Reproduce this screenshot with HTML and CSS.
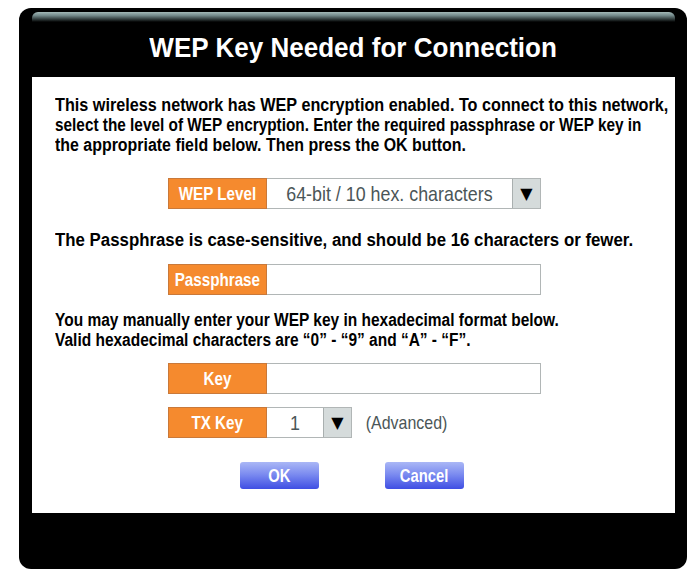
FILE: index.html
```html
<!DOCTYPE html>
<html>
<head>
<meta charset="utf-8">
<title>WEP Key Needed for Connection</title>
<link rel="stylesheet" href="styles.css">
</head>
<body>
<div class="device">
  <div class="topbar"></div>
  <h1 class="title"><span class="cond">WEP Key Needed for Connection</span></h1>
  <div class="panel">
    <p class="copy intro">
      <span class="line l1">This wireless network has WEP encryption enabled. To connect to this network,</span>
      <span class="line l2">select the level of WEP encryption. Enter the required passphrase or WEP key in</span>
      <span class="line l3">the appropriate field below. Then press the OK button.</span>
    </p>

    <div class="row row-level">
      <div class="label"><span class="cond">WEP Level</span></div>
      <div class="field select">
        <span class="value"><span class="cond">64-bit / 10 hex. characters</span></span>
        <span class="arrow">&#9660;</span>
      </div>
    </div>

    <p class="copy case"><span class="line">The Passphrase is case-sensitive, and should be 16 characters or fewer.</span></p>

    <div class="row row-pass">
      <div class="label"><span class="cond">Passphrase</span></div>
      <div class="field"></div>
    </div>

    <p class="copy hex">
      <span class="line">You may manually enter your WEP key in hexadecimal format below.</span>
      <span class="line">Valid hexadecimal characters are “0” - “9” and “A” - “F”.</span>
    </p>

    <div class="row row-key">
      <div class="label"><span class="cond">Key</span></div>
      <div class="field"></div>
    </div>

    <div class="row row-tx">
      <div class="label"><span class="cond">TX Key</span></div>
      <div class="field select small">
        <span class="value"><span class="cond">1</span></span>
        <span class="arrow">&#9660;</span>
      </div>
      <span class="note"><span class="cond">(Advanced)</span></span>
    </div>

    <div class="buttons">
      <button class="btn"><span class="cond">OK</span></button>
      <button class="btn"><span class="cond">Cancel</span></button>
    </div>
  </div>
</div>
</body>
</html>
```

FILE: styles.css
```css
html, body {
  margin: 0;
  padding: 0;
  background: #ffffff;
}

body {
  font-family: "Liberation Sans", Arial, sans-serif;
}

/* narrow the sans face to a condensed look */
.cond {
  display: inline-block;
  white-space: nowrap;
  transform: scaleX(0.86);
}

.device {
  box-sizing: border-box;
  width: 668px;
  height: 561px;
  margin: 8px 0 0 19px;
  padding: 4px 12px 0 13px;
  background: #000000;
  border-radius: 12px;
}

.topbar {
  height: 10px;
  border-radius: 6px 6px 0 0;
  background: linear-gradient(to bottom, #a3b9b7 0%, #73898a 35%, #2c3636 75%, #000000 100%);
}

.title {
  margin: 0;
  height: 55px;
  line-height: 52px;
  text-align: center;
  color: #ffffff;
  font-size: 28px;
  font-weight: bold;
}

.title .cond {
  transform: scaleX(0.93);
}

.panel {
  box-sizing: border-box;
  height: 436px;
  background: #ffffff;
  padding: 18px 0 0 23px;
  display: flex;
  flex-direction: column;
  align-items: flex-start;
  overflow: hidden;
}

.copy {
  align-self: stretch;
  margin: 0;
  color: #000000;
  font-size: 18px;
  font-weight: bold;
  line-height: 20px;
}

.copy .line {
  display: block;
  white-space: nowrap;
  transform-origin: 0 0;
  transform: scaleX(0.87);
}

.intro .l1 { transform: scaleX(0.9); }
.intro .l2 { transform: scaleX(0.853); }
.intro .l3 { transform: scaleX(0.885); }
.case .line { transform: scaleX(0.935); }
.hex .line  { transform: scaleX(0.86); }

.intro { margin-bottom: 23px; }
.case  { margin: 21px 0 14px; }
.hex   { margin: 15px 0 13px; }

.row {
  display: flex;
  align-items: stretch;
  height: 31px;
  margin-left: 113px;
}

.row-key { margin-bottom: 13px; }

.label {
  box-sizing: border-box;
  width: 99px;
  display: flex;
  align-items: center;
  justify-content: center;
  background: #f58a2e;
  border: 1px solid #c9793a;
  color: #ffffff;
  font-size: 19px;
  font-weight: bold;
}

.label .cond {
  transform: scaleX(0.8);
}

.field {
  box-sizing: border-box;
  width: 274px;
  background: #ffffff;
  border: 1px solid #b1b6b6;
  border-left: none;
}

.select {
  display: flex;
  align-items: stretch;
}

.select .value {
  flex: 1;
  display: flex;
  align-items: center;
  justify-content: center;
  color: #4b5658;
  font-size: 21px;
}

.select .value .cond {
  transform: scaleX(0.85);
}

.select .arrow {
  box-sizing: border-box;
  width: 28px;
  display: flex;
  align-items: center;
  justify-content: center;
  background: #d5dbdb;
  border-left: 1px solid #a9afaf;
  color: #000000;
  font-family: "DejaVu Sans", sans-serif;
  font-size: 16px;
}

.select.small {
  width: 85px;
}

.note {
  display: flex;
  align-items: center;
  margin-left: 6px;
  color: #4b5658;
  font-size: 19px;
}

.note .cond {
  transform: scaleX(0.84);
}

.buttons {
  display: flex;
  gap: 66px;
  margin: 24px 0 0 185px;
}

.btn {
  width: 79px;
  height: 27px;
  padding: 0;
  border: none;
  border-radius: 3px;
  background: linear-gradient(to bottom, #aab7f6 0%, #7c8cf0 45%, #3f4ee3 100%);
  color: #ffffff;
  font-family: inherit;
  font-size: 19px;
  font-weight: bold;
}

.btn .cond {
  transform: scaleX(0.78);
}
```
